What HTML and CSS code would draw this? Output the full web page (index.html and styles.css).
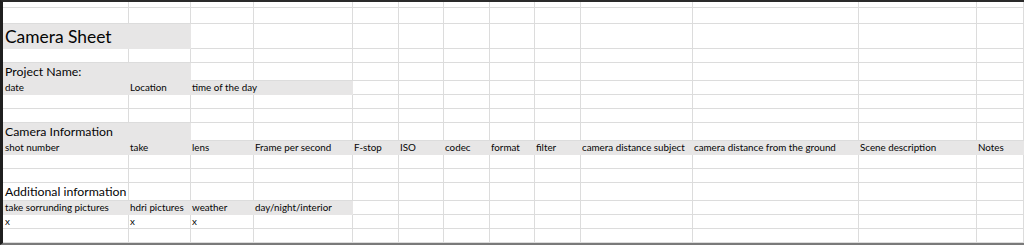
FILE: index.html
```html
<!DOCTYPE html>
<html lang="en">
<head>
<meta charset="utf-8">
<title>Camera Sheet</title>
<link rel="stylesheet" href="styles.css">
</head>
<body>
<div class="sheet">
  <div class="row h6"><div class="c"></div><div class="c"></div><div class="c"></div><div class="c"></div><div class="c"></div><div class="c"></div><div class="c"></div><div class="c"></div><div class="c"></div><div class="c"></div><div class="c"></div><div class="c"></div><div class="c"></div></div>
  <div class="row h16"><div class="c"></div><div class="c"></div><div class="c"></div><div class="c"></div><div class="c"></div><div class="c"></div><div class="c"></div><div class="c"></div><div class="c"></div><div class="c"></div><div class="c"></div><div class="c"></div><div class="c"></div></div>
  <div class="row h25"><div class="c f big">Camera Sheet</div><div class="c f"></div><div class="c"></div><div class="c"></div><div class="c"></div><div class="c"></div><div class="c"></div><div class="c"></div><div class="c"></div><div class="c"></div><div class="c"></div><div class="c"></div><div class="c"></div></div>
  <div class="row h14"><div class="c"></div><div class="c"></div><div class="c"></div><div class="c"></div><div class="c"></div><div class="c"></div><div class="c"></div><div class="c"></div><div class="c"></div><div class="c"></div><div class="c"></div><div class="c"></div><div class="c"></div></div>
  <div class="row h18"><div class="c f mid">Project Name:</div><div class="c f"></div><div class="c"></div><div class="c"></div><div class="c"></div><div class="c"></div><div class="c"></div><div class="c"></div><div class="c"></div><div class="c"></div><div class="c"></div><div class="c"></div><div class="c"></div></div>
  <div class="row h14"><div class="c f">date</div><div class="c f">Location</div><div class="c f">time of the day</div><div class="c f"></div><div class="c"></div><div class="c"></div><div class="c"></div><div class="c"></div><div class="c"></div><div class="c"></div><div class="c"></div><div class="c"></div><div class="c"></div></div>
  <div class="row h14"><div class="c"></div><div class="c"></div><div class="c"></div><div class="c"></div><div class="c"></div><div class="c"></div><div class="c"></div><div class="c"></div><div class="c"></div><div class="c"></div><div class="c"></div><div class="c"></div><div class="c"></div></div>
  <div class="row h14"><div class="c"></div><div class="c"></div><div class="c"></div><div class="c"></div><div class="c"></div><div class="c"></div><div class="c"></div><div class="c"></div><div class="c"></div><div class="c"></div><div class="c"></div><div class="c"></div><div class="c"></div></div>
  <div class="row h18"><div class="c f mid">Camera Information</div><div class="c f"></div><div class="c"></div><div class="c"></div><div class="c"></div><div class="c"></div><div class="c"></div><div class="c"></div><div class="c"></div><div class="c"></div><div class="c"></div><div class="c"></div><div class="c"></div></div>
  <div class="row h14"><div class="c f">shot number</div><div class="c f">take</div><div class="c f">lens</div><div class="c f">Frame per second</div><div class="c f">F-stop</div><div class="c f">ISO</div><div class="c f">codec</div><div class="c f">format</div><div class="c f">filter</div><div class="c f">camera distance subject</div><div class="c f">camera distance from the ground</div><div class="c f">Scene description</div><div class="c f">Notes</div></div>
  <div class="row h14"><div class="c"></div><div class="c"></div><div class="c"></div><div class="c"></div><div class="c"></div><div class="c"></div><div class="c"></div><div class="c"></div><div class="c"></div><div class="c"></div><div class="c"></div><div class="c"></div><div class="c"></div></div>
  <div class="row h14"><div class="c"></div><div class="c"></div><div class="c"></div><div class="c"></div><div class="c"></div><div class="c"></div><div class="c"></div><div class="c"></div><div class="c"></div><div class="c"></div><div class="c"></div><div class="c"></div><div class="c"></div></div>
  <div class="row h18"><div class="c mid">Additional information</div><div class="c"></div><div class="c"></div><div class="c"></div><div class="c"></div><div class="c"></div><div class="c"></div><div class="c"></div><div class="c"></div><div class="c"></div><div class="c"></div><div class="c"></div><div class="c"></div></div>
  <div class="row h14"><div class="c f">take sorrunding pictures</div><div class="c f">hdri pictures</div><div class="c f">weather</div><div class="c f">day/night/interior</div><div class="c"></div><div class="c"></div><div class="c"></div><div class="c"></div><div class="c"></div><div class="c"></div><div class="c"></div><div class="c"></div><div class="c"></div></div>
  <div class="row h14"><div class="c">x</div><div class="c">x</div><div class="c">x</div><div class="c"></div><div class="c"></div><div class="c"></div><div class="c"></div><div class="c"></div><div class="c"></div><div class="c"></div><div class="c"></div><div class="c"></div><div class="c"></div></div>
  <div class="row h14"><div class="c"></div><div class="c"></div><div class="c"></div><div class="c"></div><div class="c"></div><div class="c"></div><div class="c"></div><div class="c"></div><div class="c"></div><div class="c"></div><div class="c"></div><div class="c"></div><div class="c"></div></div>
</div>
</body>
</html>
```

FILE: styles.css
```css
html, body {
  margin: 0;
  background: #fff;
}

body {
  width: 1024px;
  height: 246px;
  overflow: hidden;
  font-family: Lato, "Liberation Sans", sans-serif;
  color: #050505;
}

/* worksheet frame */
.sheet {
  border-left: 3px solid #1f1f1f;
  border-top: 2px solid #2a2a2a;
  border-bottom: 2px solid #7a7a7a;
}

/* every row shares the same column widths */
.row {
  display: grid;
  grid-template-columns: 126px 62px 63px 99px 46px 45px 46px 45px 46px 112px 166px 118px minmax(0, 1fr);
}

.h6 { height: 6px; }
.h14 { height: 14px; }
.h16 { height: 16px; }
.h18 { height: 18px; }
.h25 { height: 25px; }

/* a cell: text sits on the bottom edge and spills right */
.c {
  box-sizing: border-box;
  display: flex;
  align-items: flex-end;
  border-right: 1px solid #dcdcdc;
  border-bottom: 1px solid #dcdcdc;
  padding: 0 0 1px 1px;
  font-size: 9.8px;
  line-height: 12px;
  white-space: nowrap;
}

/* cells holding text stay above their right-hand neighbours */
.c:not(:empty) {
  z-index: 1;
}

.c:first-child {
  padding-left: 2px;
}

/* grey filled cells hide their gridlines */
.f {
  background: #e7e6e6;
  border-color: #e7e6e6;
}

.mid {
  font-size: 12.3px;
  line-height: 15px;
}

.big {
  font-size: 17.4px;
  line-height: 20px;
  padding-bottom: 1px;
}
```
